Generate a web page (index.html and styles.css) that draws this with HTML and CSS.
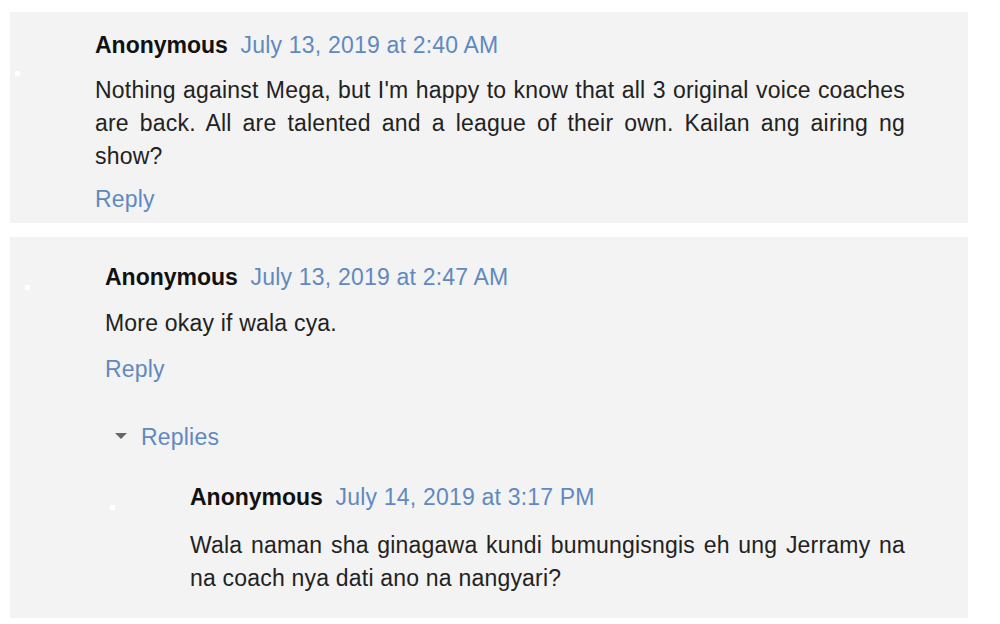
FILE: index.html
```html
<!DOCTYPE html>
<html lang="en">
<head>
  <meta charset="UTF-8">
  <title>Comments</title>
  <meta name="viewport" content="width=device-width,initial-scale=1">
  <link rel="stylesheet" href="styles.css">
</head>
<body>
  <div class="thread">
    <div class="comment first">
      <div class="avatar"><span class="dot"></span></div>
      <div class="block">
        <div class="head"><b class="user">Anonymous</b> <a class="date" href="#">July 13, 2019 at 2:40 AM</a></div>
        <p class="text">Nothing against Mega, but I'm happy to know that all 3 original voice coaches are back. All are talented and a league of their own. Kailan ang airing ng show?</p>
        <a class="reply" href="#">Reply</a>
      </div>
    </div>
  </div>

  <div class="thread">
    <div class="comment second">
      <div class="avatar"><span class="dot"></span></div>
      <div class="block">
        <div class="head"><b class="user">Anonymous</b> <a class="date" href="#">July 13, 2019 at 2:47 AM</a></div>
        <p class="text">More okay if wala cya.</p>
        <a class="reply" href="#">Reply</a>

        <div class="replies">
          <div class="toggle"><span class="arrow"></span><a href="#">Replies</a></div>
          <div class="comment nested">
            <div class="avatar"><span class="dot"></span></div>
            <div class="block">
              <div class="head"><b class="user">Anonymous</b> <a class="date" href="#">July 14, 2019 at 3:17 PM</a></div>
              <p class="text">Wala naman sha ginagawa kundi bumungisngis eh ung Jerramy na na coach nya dati ano na nangyari?</p>
            </div>
          </div>
        </div>
      </div>
    </div>
  </div>
</body>
</html>
```

FILE: styles.css
```css
body { margin: 0; padding: 12px 0 0 10px; background: #fff; font-family: "Liberation Sans", Arial, sans-serif; font-size: 23px; line-height: 33px; color: #222; letter-spacing: 0.2px; }
a { color: #6089c0; text-decoration: none; }
.thread { width: 958px; background: #f3f3f3; margin-bottom: 14px; }
.comment { display: flex; }
.avatar { width: 80px; flex: none; }
.dot { display: block; width: 5px; height: 5px; background: #fff; }
.block { flex: none; }
.head { white-space: nowrap; }
.user { color: #111; font-weight: bold; letter-spacing: 0; margin-right: 6px; }
.text { margin: 0; text-align: justify; }
.reply { display: inline-block; }

.first { padding: 17px 0 7px 5px; }
.first .dot { margin-top: 42px; }
.first .block { width: 810px; }
.first .text { margin: 12px 0 10px; }

.second { padding: 24px 0 23px 15px; }
.second .dot { margin-top: 24px; }
.second > .block { width: 800px; }
.second .text { margin: 13px 0 13px; }

.replies { margin-top: 35px; margin-left: 5px; }
.toggle { display: flex; align-items: center; padding-left: 5px; }
.arrow { width: 0; height: 0; border-left: 6px solid transparent; border-right: 6px solid transparent; border-top: 6px solid #666; margin: 0 14px 3px 0; }

.nested { margin-top: 27px; }
.nested .dot { margin-top: 24px; }
.nested .block { width: 715px; }
.nested .text { margin: 15px 0 0; }
```
